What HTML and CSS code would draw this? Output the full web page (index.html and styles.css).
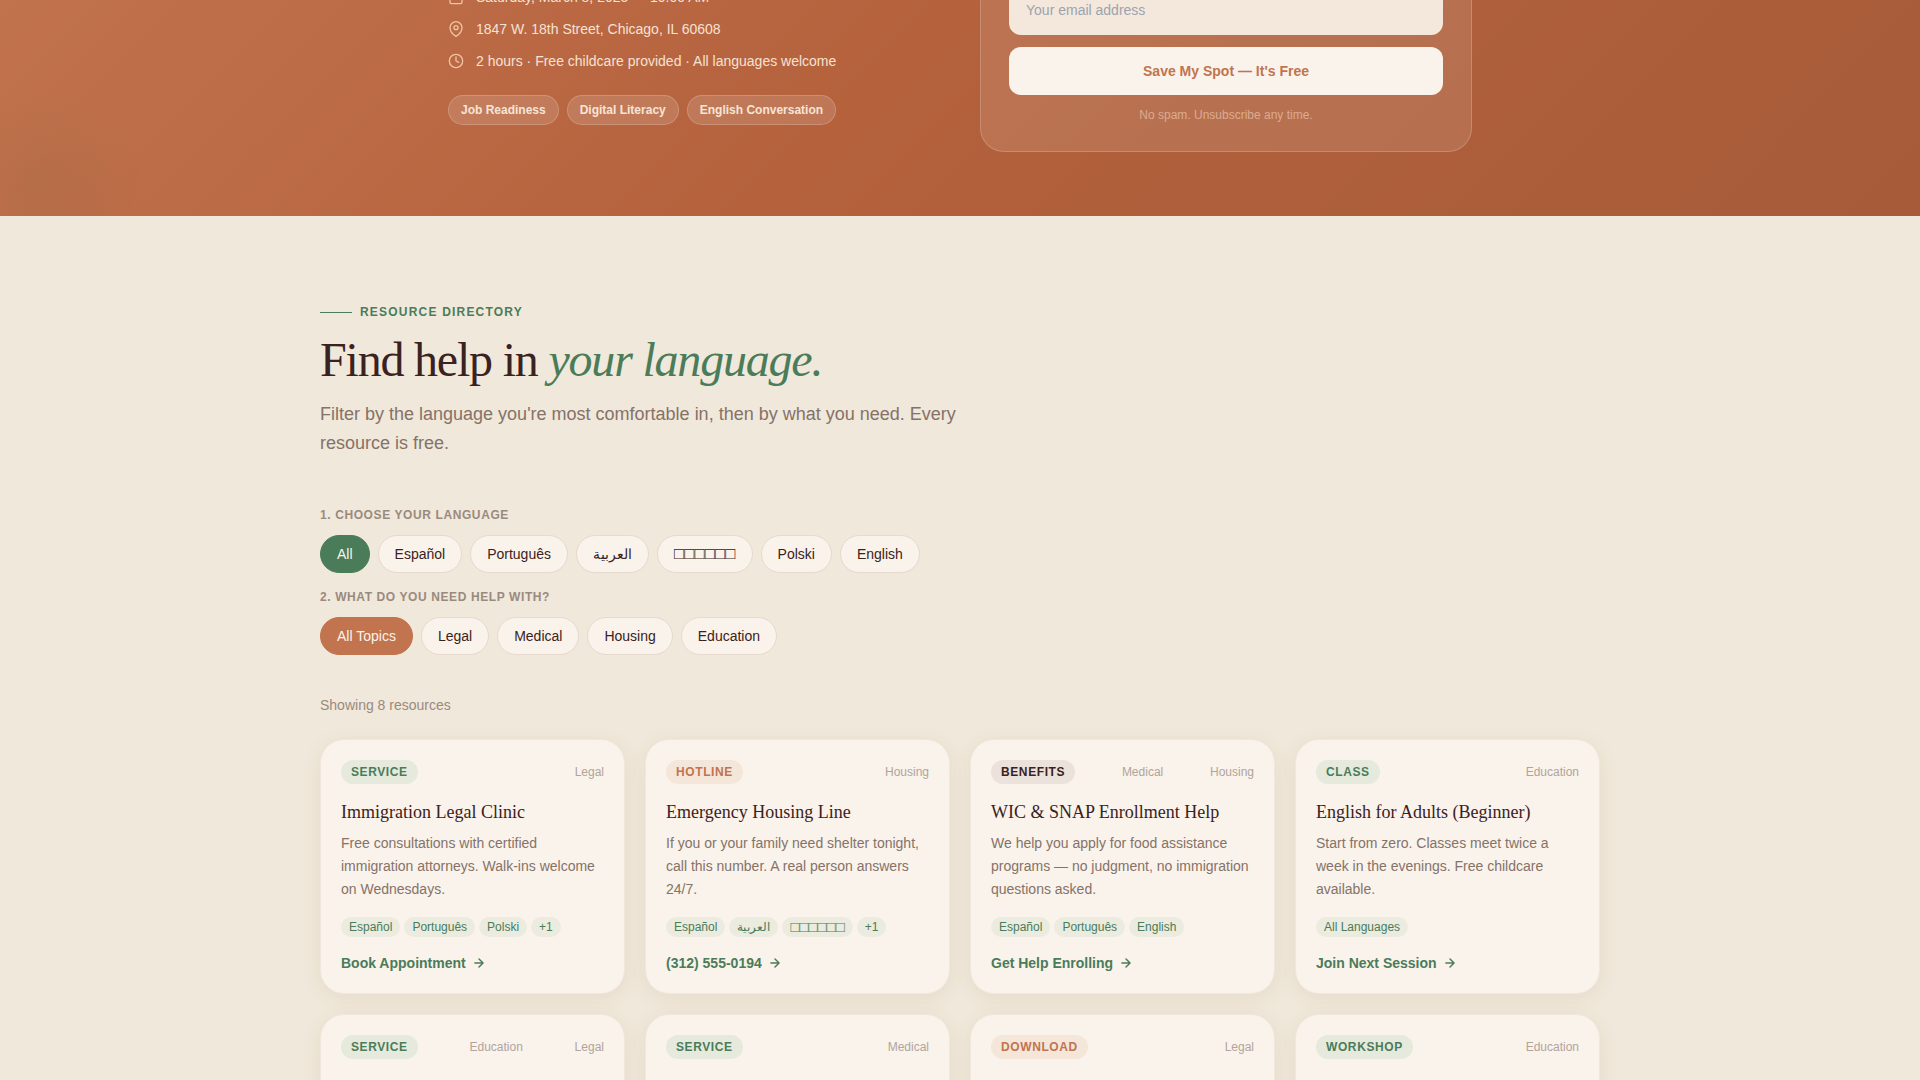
FILE: index.html
```html
<!DOCTYPE html>
<html lang="en">
<head>
<meta charset="utf-8">
<meta name="viewport" content="width=device-width, initial-scale=1">
<title>Resource Directory</title>
<link rel="stylesheet" href="styles.css">
</head>
<body>
<svg class="sprite" aria-hidden="true">
  <symbol id="arrow" viewBox="0 0 24 24"><path stroke-width="2.5" d="M5 12h14M12 5l7 7-7 7"/></symbol>
</svg>

<section class="hero">
  <div class="hero-inner">
    <div class="event">
      <ul class="facts">
        <li><svg class="fact-icon" viewBox="0 0 24 24"><rect x="3" y="4" width="18" height="18" rx="2"/><path d="M16 2v4M8 2v4M3 10h18"/></svg>Saturday, March 8, 2025 — 10:00 AM</li>
        <li><svg class="fact-icon" viewBox="0 0 24 24"><path d="M21 10c0 7-9 13-9 13s-9-6-9-13a9 9 0 0 1 18 0z"/><circle cx="12" cy="10" r="3"/></svg>1847 W. 18th Street, Chicago, IL 60608</li>
        <li><svg class="fact-icon" viewBox="0 0 24 24"><circle cx="12" cy="12" r="10"/><path d="M12 6v6l4 2"/></svg>2 hours · Free childcare provided · All languages welcome</li>
      </ul>
      <ul class="topics">
        <li>Job Readiness</li>
        <li>Digital Literacy</li>
        <li>English Conversation</li>
      </ul>
    </div>
    <form class="signup">
      <input class="signup-email" type="email" placeholder="Your email address" aria-label="Your email address">
      <button class="signup-button" type="button">Save My Spot — It's Free</button>
      <p class="signup-note">No spam. Unsubscribe any time.</p>
    </form>
  </div>
</section>

<main class="directory">
  <p class="eyebrow">Resource Directory</p>
  <h2 class="title">Find help in <em>your language.</em></h2>
  <p class="lead">Filter by the language you're most comfortable in, then by what you need. Every resource is free.</p>

  <div class="filters">
    <section class="filter">
      <h3 class="filter-label">1. Choose your language</h3>
      <div class="chips">
        <button class="chip chip-green" type="button">All</button>
        <button class="chip" type="button">Español</button>
        <button class="chip" type="button">Português</button>
        <button class="chip" type="button">العربية</button>
        <button class="chip chip-boxes" type="button">□□□□□□</button>
        <button class="chip" type="button">Polski</button>
        <button class="chip" type="button">English</button>
      </div>
    </section>
    <section class="filter">
      <h3 class="filter-label">2. What do you need help with?</h3>
      <div class="chips">
        <button class="chip chip-clay" type="button">All Topics</button>
        <button class="chip" type="button">Legal</button>
        <button class="chip" type="button">Medical</button>
        <button class="chip" type="button">Housing</button>
        <button class="chip" type="button">Education</button>
      </div>
    </section>
  </div>

  <p class="count">Showing 8 resources</p>

  <div class="grid">
    <article class="card">
      <div class="card-head"><span class="badge">Service</span><span>Legal</span></div>
      <h3 class="card-title">Immigration Legal Clinic</h3>
      <p class="card-text">Free consultations with certified immigration attorneys. Walk-ins welcome on Wednesdays.</p>
      <ul class="langs"><li>Español</li><li>Português</li><li>Polski</li><li>+1</li></ul>
      <a class="action" href="#">Book Appointment <svg class="action-icon"><use href="#arrow"/></svg></a>
    </article>
    <article class="card">
      <div class="card-head"><span class="badge badge-clay">Hotline</span><span>Housing</span></div>
      <h3 class="card-title">Emergency Housing Line</h3>
      <p class="card-text">If you or your family need shelter tonight, call this number. A real person answers 24/7.</p>
      <ul class="langs"><li>Español</li><li>العربية</li><li class="lang-boxes">□□□□□□</li><li>+1</li></ul>
      <a class="action" href="#">(312) 555-0194 <svg class="action-icon"><use href="#arrow"/></svg></a>
    </article>
    <article class="card">
      <div class="card-head"><span class="badge badge-dark">Benefits</span><span>Medical</span><span>Housing</span></div>
      <h3 class="card-title">WIC &amp; SNAP Enrollment Help</h3>
      <p class="card-text">We help you apply for food assistance programs — no judgment, no immigration questions asked.</p>
      <ul class="langs"><li>Español</li><li>Português</li><li>English</li></ul>
      <a class="action" href="#">Get Help Enrolling <svg class="action-icon"><use href="#arrow"/></svg></a>
    </article>
    <article class="card">
      <div class="card-head"><span class="badge">Class</span><span>Education</span></div>
      <h3 class="card-title">English for Adults (Beginner)</h3>
      <p class="card-text">Start from zero. Classes meet twice a week in the evenings. Free childcare available.</p>
      <ul class="langs"><li>All Languages</li></ul>
      <a class="action" href="#">Join Next Session <svg class="action-icon"><use href="#arrow"/></svg></a>
    </article>
    <article class="card">
      <div class="card-head"><span class="badge">Service</span><span>Education</span><span>Legal</span></div>
    </article>
    <article class="card">
      <div class="card-head"><span class="badge">Service</span><span>Medical</span></div>
    </article>
    <article class="card">
      <div class="card-head"><span class="badge badge-clay">Download</span><span>Legal</span></div>
    </article>
    <article class="card">
      <div class="card-head"><span class="badge">Workshop</span><span>Education</span></div>
    </article>
  </div>
</main>
</body>
</html>
```
FILE: styles.css
```css
:root {
  --cream: #faf3eb;
  --sand: #f0e8da;
  --green: #4a7c59;
  --clay: #c1744e;
  --ink: #3b2220;
}

* { box-sizing: border-box; }

body {
  margin: 0;
  height: 100vh;
  overflow: hidden;
  background: var(--sand);
  color: var(--ink);
  font-family: "Liberation Sans", Arial, sans-serif;
  font-size: 14px;
  line-height: 20px;
}

h2, h3, p, ul { margin: 0; padding: 0; }
ul { list-style: none; }
button, input { font: inherit; }
svg { fill: none; stroke: currentColor; stroke-linecap: round; stroke-linejoin: round; }
.sprite { display: none; }

/* Event banner */
.hero {
  overflow: hidden;
  padding: 0 24px 64px;
  background:
    radial-gradient(circle at 44px 186px, rgba(110, 100, 60, 0.11), rgba(110, 100, 60, 0) 100px),
    linear-gradient(135deg, #c1734d 0%, #b4613c 46%, #a75b39 100%);
}

.hero-inner {
  display: grid;
  grid-template-columns: repeat(2, minmax(0, 1fr));
  gap: 40px;
  align-items: start;
  max-width: 1024px;
  margin: -13px auto 0;
}

.facts { display: grid; gap: 12px; color: #f6e1d2; }
.facts li { display: flex; align-items: center; gap: 12px; }
.fact-icon { width: 16px; height: 16px; color: #f0c4a4; stroke-width: 2; }

.topics { display: flex; flex-wrap: wrap; gap: 8px; margin-top: 24px; }
.topics li {
  padding: 6px 12px;
  border: 1px solid rgba(250, 243, 235, 0.2);
  border-radius: 16px;
  background: rgba(250, 243, 235, 0.15);
  color: #f8e4d6;
  font-size: 12px;
  font-weight: 700;
  line-height: 16px;
}

.signup {
  display: grid;
  gap: 12px;
  padding: 0 28px 28px;
  border: 1px solid rgba(250, 243, 235, 0.2);
  border-top: 0;
  border-radius: 0 0 24px 24px;
  background: rgba(250, 243, 235, 0.12);
}
.signup-email, .signup-button { width: 100%; border: 0; border-radius: 12px; }
.signup-email { padding: 13px 17px 15px; background: #f4e8dc; color: var(--ink); }
.signup-email::placeholder { color: #9ca3af; opacity: 1; }
.signup-button { padding: 14px 16px; background: var(--cream); color: var(--clay); font-weight: 700; }
.signup-note { color: #dcab91; font-size: 12px; line-height: 16px; text-align: center; }

/* Directory intro */
.directory { max-width: 1328px; margin: 0 auto; padding: 88px 24px; }

.eyebrow {
  display: flex;
  align-items: center;
  gap: 8px;
  color: var(--green);
  font-size: 12px;
  font-weight: 700;
  letter-spacing: 0.1em;
  line-height: 16px;
  text-transform: uppercase;
}
.eyebrow::before { content: ""; width: 32px; height: 1px; background: currentColor; }

.title {
  margin-top: 12px;
  font-family: "Liberation Serif", "Times New Roman", serif;
  font-size: 48px;
  font-weight: 400;
  letter-spacing: -0.025em;
  line-height: 56px;
}
.title em { color: var(--green); }

.lead { max-width: 640px; margin-top: 12px; color: #857268; font-size: 18px; line-height: 29px; }

/* Filters */
.filters { display: grid; gap: 16px; margin-top: 49px; }
.filter-label {
  color: #9a8a7e;
  font-size: 12px;
  letter-spacing: 0.05em;
  line-height: 16px;
  text-transform: uppercase;
}
.chips { display: flex; flex-wrap: wrap; gap: 8px; margin-top: 12px; }
.chip {
  height: 38px;
  padding: 0 16px;
  border: 1px solid #e5dacd;
  border-radius: 19px;
  background: var(--cream);
  color: var(--ink);
}
.chip-green { border-color: var(--green); background: var(--green); color: var(--cream); }
.chip-clay { border-color: var(--clay); background: var(--clay); color: var(--cream); }
.chip-boxes { font-size: 17px; }

.count { margin-top: 40px; color: #9a8a7e; }

/* Resource cards */
.grid {
  display: grid;
  grid-template-columns: repeat(4, minmax(0, 1fr));
  grid-auto-rows: 1fr;
  gap: 20px;
  margin-top: 24px;
}
.card {
  padding: 20px;
  border: 1px solid #f1e7dc;
  border-radius: 24px;
  background: var(--cream);
  box-shadow: 0 4px 20px rgba(110, 75, 30, 0.08);
}
.card-head {
  display: flex;
  align-items: center;
  justify-content: space-between;
  color: #b0a49c;
  font-size: 12px;
  line-height: 16px;
}
.badge {
  padding: 4px 10px;
  border-radius: 12px;
  background: #e6eadd;
  color: var(--green);
  font-weight: 700;
  letter-spacing: 0.05em;
  text-transform: uppercase;
}
.badge-clay { background: #f5e6da; color: var(--clay); }
.badge-dark { background: #ebe2dc; color: var(--ink); }

.card-title {
  margin-top: 16px;
  font-family: "Liberation Serif", "Times New Roman", serif;
  font-size: 18px;
  font-weight: 400;
  line-height: 24px;
}
.card-text { margin-top: 8px; color: #857268; line-height: 23px; }

.langs { display: flex; flex-wrap: wrap; gap: 4px; margin-top: 16px; }
.langs li {
  height: 20px;
  padding: 2px 8px;
  border-radius: 10px;
  background: #ecebdf;
  color: var(--green);
  font-size: 12px;
  line-height: 16px;
}
.langs .lang-boxes { font-size: 15px; }

.action {
  display: flex;
  align-items: center;
  gap: 6px;
  margin-top: 16px;
  color: var(--green);
  font-weight: 700;
  text-decoration: none;
}
.action-icon { width: 14px; height: 14px; }
```
